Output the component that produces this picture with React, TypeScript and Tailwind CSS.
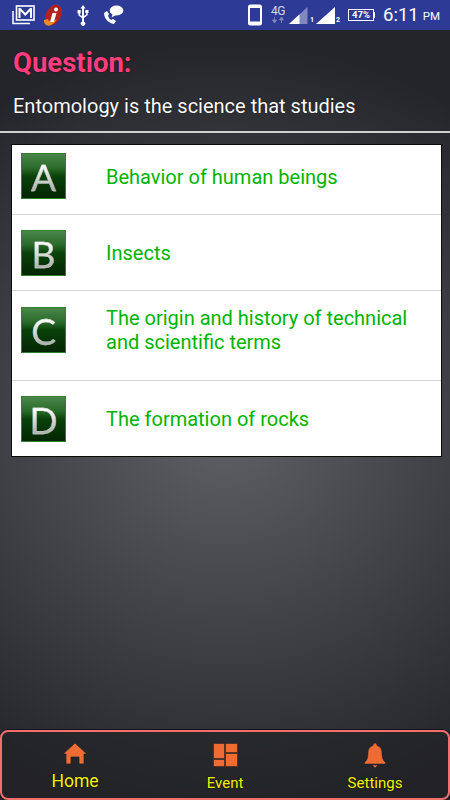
import React from "react";

const options = [
  { l: "A", t: "Behavior of human beings", h: "h-[70px]", top: "pt-[8px]", text: "pt-[12px]" },
  { l: "B", t: "Insects", h: "h-[76px]", top: "pt-[15px]", text: "pt-[11px]" },
  { l: "C", t: "The origin and history of technical and scientific terms", h: "h-[90px]", top: "pt-[16px]", text: "-mt-[1px]" },
  { l: "D", t: "The formation of rocks", h: "h-[75px]", top: "pt-[15px]", text: "pt-[11px]" },
];

function StatusBar() {
  return (
    <div className="h-[30px] shrink-0 bg-[#2e3b96] flex items-center pl-[12px] pr-[10px] text-white font-['Roboto',sans-serif]">
      <svg width="23" height="20" viewBox="0 0 23 20" className="mr-[8px]">
        <path d="M1 6v12.500h17" fill="none" stroke="#fff" strokeWidth="1.500" />
        <rect x="4.500" y="1" width="17.500" height="14" fill="#2e3b96" stroke="#fff" strokeWidth="1.600" />
        <path d="M7.500 3v10M19 3v10M7.500 3.500l5.750 6 5.750-6" fill="none" stroke="#fff" strokeWidth="2" />
      </svg>
      <svg width="20" height="23" viewBox="0 0 20 23" className="mr-[13px]">
        <ellipse cx="10.500" cy="11" rx="7.500" ry="11" transform="rotate(28 10.500 11)" fill="#b3201f" />
        <path d="M1 16c-.5 4 3 7 7 5 3-1.500 5-4 6-6-3 3-8 4-9 0z" fill="#f08a1d" />
        <path d="M9.500 9h4l-2.500 9H7z" fill="#fff" />
        <circle cx="13" cy="5.500" r="2" fill="#fff" />
      </svg>
      <svg width="14" height="22" viewBox="0 0 14 22" className="mr-[12px]">
        <path d="M7 1l2.500 3.500H8v13.200a2.200 2.200 0 1 1-2 0V14L2.500 11.500V9.500H1.500V6h3.200v3.500H4v1.300l2 1.500V4.500H4.500z" fill="#fff" />
        <path d="M8 12l2.300-1.800V9H9.300V6h3.200v3h-.8v1.900L8 14z" fill="#fff" />
      </svg>
      <svg width="22" height="22" viewBox="0 0 22 22">
        <ellipse cx="14.500" cy="6.500" rx="6.800" ry="5" fill="#fff" />
        <path d="M11 9l-1.500 4.500L14 11z" fill="#fff" />
        <path d="M2 9c0 5 4 10 10 11l2-3-3-2-2 1c-1-1-2-2-3-4l1-2-2-3z" fill="#fff" />
      </svg>
      <div className="flex-1" />
      <svg width="14" height="22" viewBox="0 0 14 22" className="mr-[9px]">
        <rect x="1" y="1.500" width="12" height="19" rx="1.500" fill="none" stroke="#fff" strokeWidth="2" />
        <rect x="1" y="1.500" width="12" height="2.500" fill="#fff" />
        <rect x="1" y="17.500" width="12" height="3" fill="#fff" />
      </svg>
      <div className="w-[14px] mr-[4px] flex flex-col items-center leading-none">
        <span className="text-[12px] text-[#d5d8ec] leading-[11px] tracking-[-0.5px]">4G</span>
        <svg width="14" height="7" viewBox="0 0 14 7">
          <path d="M3.500 0v3M1.500 3h4l-2 3zM10.500 6V3M8.500 3h4l-2-3z" stroke="#8088bf" fill="#8088bf" strokeWidth="0.800" />
        </svg>
      </div>
      <svg width="19" height="18" viewBox="0 0 19 18" className="mt-[2px]">
        <path d="M18.500 0v17H0z" fill="#8088bf" />
        <path d="M10.500 7.500V17H0z" fill="#fff" />
      </svg>
      <span className="text-[7px] font-bold w-[8px] pl-[2px] self-end mb-[5px]">1</span>
      <svg width="19" height="18" viewBox="0 0 19 18" className="mt-[2px]">
        <path d="M19 0v17H0z" fill="#fff" />
      </svg>
      <span className="text-[7px] font-bold w-[13px] pl-[1px] self-end mb-[5px]">2</span>
      <div className="w-[26px] h-[12px] border border-white flex items-center justify-center">
        <span className="text-[9.500px] font-bold leading-none">47%</span>
      </div>
      <div className="w-[1px] h-[6px] bg-white mr-[8px]" />
      <span className="text-[18.500px] leading-none mr-[4px]">6:11</span>
      <span className="text-[11.500px] leading-none mt-[4px]">PM</span>
    </div>
  );
}

function NavItem({ icon, label, big }: { icon: React.ReactNode; label: string; big?: boolean }) {
  return (
    <div className="flex-1 flex flex-col items-center">
      <div className="h-[28px] flex items-center justify-center">{icon}</div>
      <span
        className={`${big ? "text-[17.500px] mt-[2px]" : "text-[15px] mt-[4px]"} text-[#f5f500] leading-[20px] [text-shadow:0_0_1px_#000]`}
      >
        {label}
      </span>
    </div>
  );
}

export default function App() {
  return (
    <div className="w-[450px] h-[800px] flex flex-col overflow-hidden font-['Roboto',sans-serif] bg-[#222327]">
      <StatusBar />
      <div className="flex-1 flex flex-col bg-[radial-gradient(ellipse_420px_390px_at_225px_400px,#5e6066_0%,#24252a_100%)]">
        <div className="h-[100px] shrink-0 px-[12px]">
          <div className="pl-[1px] text-[27.500px] font-bold text-[#ff3d7f] leading-[30px] mt-[18px] [text-shadow:0_0_1px_#000]">
            Question:
          </div>
          <div className="text-[20px] text-white leading-[26px] mt-[15px] pl-[1px] [text-shadow:0_0_1px_#000]">
            Entomology is the science that studies
          </div>
        </div>
        <div className="h-[2px] bg-[#d0d0d0] mt-[1px] shrink-0" />
        <div className="mx-[12px] mt-[12px] w-[429px] bg-white shadow-[0_0_0_1px_#0a0a0a]">
          {options.map((o, i) => (
            <div
              key={o.l}
              className={`${o.h} ${o.top} ${i < 3 ? "border-b border-[#d4d4d4]" : ""} flex pl-[9px] pr-[20px]`}
            >
              <div className="w-[45px] h-[46px] shrink-0 border border-[#2f7f2f] bg-[linear-gradient(180deg,#4a864a_0%,#2a6a2a_32%,#0a420a_50%,#032503_100%)] flex items-center justify-center">
                <span className="text-[37px] leading-none font-['Lato',sans-serif] text-transparent bg-clip-text bg-[linear-gradient(180deg,#ffffff_20%,#b0b4b0_85%)] [-webkit-text-stroke:0.3px_#d4d6d4]">
                  {o.l}
                </span>
              </div>
              <div className={`ml-[40px] text-[20px] leading-[24px] text-[#00b400] ${o.text}`}>{o.t}</div>
            </div>
          ))}
        </div>
        <div className="flex-1" />
        <div className="h-[70px] shrink-0 border-2 border-[#f46e6e] rounded-[8px] pt-[9px] bg-[#1f202380] shadow-[0_0_0_1px_#15161a]">
          <div className="flex -mx-[2px]">
            <NavItem
              big
              label="Home"
              icon={
                <svg width="26" height="24" viewBox="0 0 26 24" className="-mt-[3px]">
                  <path d="M13 1L25 12h-3v10h-5v-7H9v7H4V12H1z" fill="#ee6b33" stroke="#14202c" strokeWidth="0.700" />
                </svg>
              }
            />
            <NavItem
              label="Event"
              icon={
                <svg width="25" height="24" viewBox="0 0 25 24">
                  <path d="M0.500 0.500h11v15h-11zM0.500 16.500h11v7h-11zM12.500 0.500h12v9h-12zM12.500 10.500h12v13h-12z" fill="#ee6b33" stroke="#14202c" strokeWidth="0.500" />
                </svg>
              }
            />
            <NavItem
              label="Settings"
              icon={
                <svg width="22" height="26" viewBox="0 0 22 26" className="mt-[1px]">
                  <path d="M11 0c1 0 2 1 2 2.500 3.500 1 5 4 5 7.500 0 5 1 7 3.500 9.500V21H.5v-1.500C3 17 4 15 4 10c0-3.500 1.500-6.500 5-7.500C9 1 10 0 11 0zM8 22h6l-3 3z" fill="#ee6b33" stroke="#14202c" strokeWidth="0.500" />
                </svg>
              }
            />
          </div>
        </div>
      </div>
    </div>
  );
}
